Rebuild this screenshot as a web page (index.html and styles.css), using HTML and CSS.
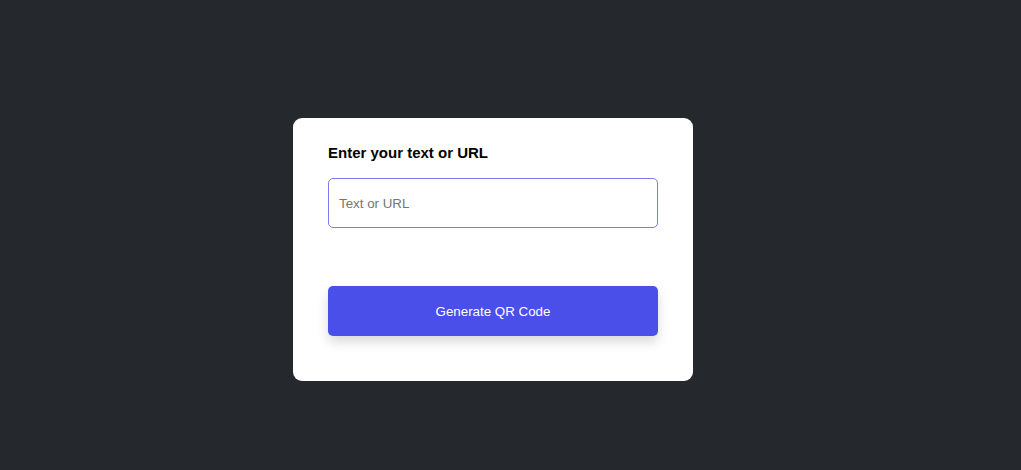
FILE: index.html
```html
<!DOCTYPE html>
<html>
<head>
<meta charset="utf-8">
<link rel="stylesheet" href="styles.css">
</head>
<body>
<div class="card">
  <label class="label" for="q">Enter your text or URL</label>
  <input class="input" id="q" type="text" placeholder="Text or URL">
  <button class="btn">Generate QR Code</button>
</div>
</body>
</html>
```
FILE: styles.css
```css
html, body { margin: 0; padding: 0; }
body {
  background: #25282c;
  width: 1021px;
  height: 470px;
  font-family: "Liberation Sans", Arial, sans-serif;
  padding: 118px 0 0 293px;
  box-sizing: border-box;
}
.card {
  width: 400px;
  height: 263px;
  box-sizing: border-box;
  background: #fff;
  border-radius: 9px;
  padding: 26px 35px 45px;
  display: flex;
  flex-direction: column;
}
.label {
  font-size: 15px;
  font-weight: bold;
  color: #000;
  line-height: 18px;
  margin-bottom: 16px;
}
.input {
  height: 50px;
  box-sizing: border-box;
  border: 1px solid #7d7af2;
  border-radius: 5px;
  padding: 0 10px;
  font-family: inherit;
  font-size: 13.333px;
  color: #333;
  outline: none;
  margin: 0 0 58px;
}
.input::placeholder { color: #757575; }
.btn {
  height: 50px;
  border: none;
  border-radius: 5px;
  background: #4a4fea;
  color: #fff;
  font-family: inherit;
  font-size: 13.333px;
  font-weight: normal;
  box-shadow: 0 6px 12px rgba(0,0,0,0.15);
}
```
